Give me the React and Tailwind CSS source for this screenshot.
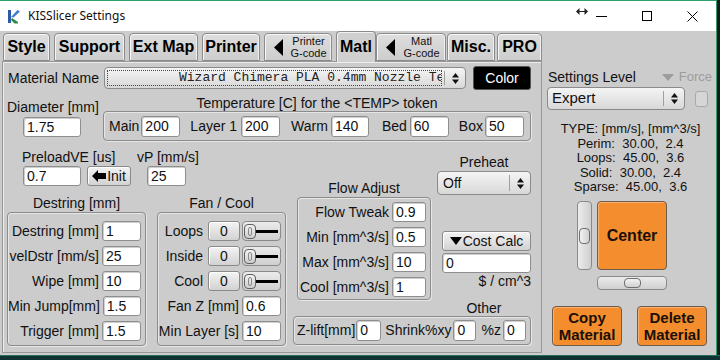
import React from 'react';

const Arrows = () => (
  <svg width="7" height="11" viewBox="0 0 7 11">
    <polygon points="0,4.5 3.5,0 7,4.5" fill="#111" />
    <polygon points="0,6.5 3.5,11 7,6.5" fill="#111" />
  </svg>
);

function Field({ v, cls = '' }) {
  return (
    <div className={`bg-white border border-[#8e8e8e] rounded-[3px] shadow-[inset_1px_1px_0_#cfcfcf] flex items-center pl-[3px] text-[14px] text-[#111] whitespace-nowrap overflow-hidden ${cls}`}>
      {v}
    </div>
  );
}

function Btn({ children, cls = '' }) {
  return (
    <div className={`bg-linear-to-b from-[#f3f3f3] to-[#d2d2d2] border border-[#8a8a8a] rounded-[3px] shadow-[inset_1px_1px_0_#ffffff] flex items-center justify-center text-[14px] text-[#111] ${cls}`}>
      {children}
    </div>
  );
}

function Group({ cls = '', children }) {
  return (
    <div className={`border border-[#8c8c8c] rounded-[4px] shadow-[inset_1px_1px_0_#e6e6e6,1px_1px_0_#e6e6e6] ${cls}`}>
      {children}
    </div>
  );
}

function Select({ cls = '', children }) {
  return (
    <div className={`bg-linear-to-b from-[#f5f5f5] to-[#d8d8d8] border border-[#8a8a8a] rounded-[4px] flex items-stretch ${cls}`}>
      <div className="flex-1 flex items-center overflow-hidden whitespace-nowrap">{children}</div>
      <div className="w-px bg-[#a0a0a0] my-[3px]" />
      <div className="w-[20px] flex items-center justify-center">
        <Arrows />
      </div>
    </div>
  );
}

function Tri({ cls = '' }) {
  return (
    <svg width="9" height="17" viewBox="0 0 9 17" className={cls}>
      <polygon points="9,0 9,17 0,8.5" fill="#000" />
    </svg>
  );
}

function Tab({ cls, children, selected }) {
  return (
    <div
      className={`rounded-t-[4px] border border-[#8b8b8b] flex items-center justify-center text-black ${
        selected
          ? 'h-[31px] bg-[#d0d0d0] border-b-0 -mb-px z-10 relative shadow-[inset_1px_1px_0_#f2f2f2]'
          : 'h-[28px] bg-linear-to-b from-[#dedede] to-[#cdcdcd] shadow-[inset_1px_1px_0_#f6f6f6,inset_-1px_0_0_#f0f0f0]'
      } ${cls}`}
    >
      {children}
    </div>
  );
}

function SmallTab({ cls, top }) {
  return (
    <Tab cls={`${cls} justify-start! pl-[9px]`}>
      <Tri />
      <div className="flex-1 ml-[3px] text-center text-[11px] leading-[12px] text-[#111]">
        <div>{top}</div>
        <div>G-code</div>
      </div>
    </Tab>
  );
}

function Slider() {
  return (
    <div className="ml-[2px] w-[39px] h-[20px] bg-linear-to-b from-[#ececec] to-[#cfcfcf] border border-[#8a8a8a] rounded-[4px] flex items-center pl-px pr-[2px]">
      <div className="w-[12px] h-[15px] rounded-[4px] border border-[#5e5e5e] bg-linear-to-b from-[#f2f2f2] to-[#cfcfcf] flex items-center justify-center">
        <div className="w-[4px] h-[9px] rounded-[2px] border border-[#8a8a8a]" />
      </div>
      <div className="flex-1 h-[3px] bg-black" />
    </div>
  );
}

function LRow({ label, children }) {
  return (
    <div className="flex justify-end items-center h-[20px] pr-[4px] text-[14px] text-[#111] whitespace-nowrap">
      <span>{label}</span>
      {children}
    </div>
  );
}

function OrangeBtn({ cls = '', children }) {
  return (
    <div className={`bg-[#f48d2d] border border-[#6d5c4c] rounded-[4px] shadow-[inset_1px_1px_0_#f9b273] flex items-center justify-center text-center font-bold text-[#1a1008] ${cls}`}>
      {children}
    </div>
  );
}

export default function App() {
  return (
    <div className="w-[720px] h-[360px] overflow-hidden bg-[#141a1a] flex flex-col font-['Liberation_Sans',Arial,sans-serif] text-[#111]">
      <div className="w-[717px] h-[355px] flex flex-col border-t border-r border-[#2f9e6d] bg-[#cccccc]">
        {/* Title bar */}
        <div className="h-[30px] bg-white flex items-center relative">
          <svg width="14" height="15" viewBox="0 0 14 15" className="ml-[7px]">
            <path d="M1 1 L4 1 L4 14 L1 14 Z" fill="#2a5aa8" />
            <path d="M4 8 L10.5 1 L13 2.5 L6.5 8.5 Z" fill="#3b7fd0" />
            <path d="M5 9 L11 13 L11 14.5 L7.5 14.5 L4 11 Z" fill="#2e8a49" />
          </svg>
          <span className="ml-[7px] text-[12px] font-['Noto_Sans',sans-serif] text-[#111]">KISSlicer Settings</span>
          <div className="ml-auto flex items-center">
            <svg width="12" height="7" viewBox="0 0 12 7" className="-mt-[9px]">
              <polygon points="0,3.5 3.5,0 3.5,7" fill="#222" />
              <polygon points="12,3.5 8.5,0 8.5,7" fill="#222" />
              <rect x="3" y="3" width="6" height="1" fill="#222" />
            </svg>
            <div className="ml-[8px] w-[11px] h-px bg-black mt-[1px]" />
            <div className="ml-[35px] w-[10px] h-[10px] border border-black" />
            <svg width="11" height="11" viewBox="0 0 11 11" className="ml-[35px] mr-[18px]">
              <path d="M0.5 0.5 L10.5 10.5 M10.5 0.5 L0.5 10.5" stroke="#000" strokeWidth="1" />
            </svg>
          </div>
        </div>

        {/* Body */}
        <div className="flex flex-1">
          {/* Left column: tabs + panel */}
          <div className="ml-[2px] w-[540px] flex flex-col">
            <div className="h-[30px] flex items-end text-[16px] font-bold">
              <Tab cls="ml-px w-[47px]">Style</Tab>
              <Tab cls="ml-[4px] w-[71px]">Support</Tab>
              <Tab cls="ml-[4px] w-[69px]">Ext Map</Tab>
              <Tab cls="ml-[4px] w-[58px]">Printer</Tab>
              <SmallTab cls="ml-[4px] w-[68px] font-normal" top="Printer" />
              <Tab cls="ml-[4px] w-[40px]" selected>Matl</Tab>
              <SmallTab cls="ml-0 w-[70px] font-normal" top="Matl" />
              <Tab cls="ml-px w-[48px]">Misc.</Tab>
              <Tab cls="ml-[2px] w-[45px]">PRO</Tab>
            </div>
            <div className="h-[292px] border border-[#979797] shadow-[inset_1px_1px_0_#ececec] flex flex-col text-[14px]">
              {/* Row A */}
              <div className="mt-[4px] h-[24px] flex items-center pl-[5px]">
                <span className="w-[96px]">Material Name</span>
                <Select cls="w-[362px] h-[22px]">
                  <div className="m-[2px] flex-1 h-[16px] border border-dotted border-[#444] pl-[71px] flex items-center overflow-hidden font-['Liberation_Mono',monospace] text-[13px] text-[#222] whitespace-nowrap">
                    Wizard Chimera PLA 0.4mm Nozzle Test
                  </div>
                </Select>
                <div className="ml-[7px] w-[58px] h-[24px] bg-black border border-[#555] rounded-[3px] text-white flex items-center justify-center text-[14px]">
                  Color
                </div>
              </div>

              {/* Row B */}
              <div className="mt-[6px] flex">
                <div className="w-[100px] pl-[4px] flex flex-col">
                  <div className="mt-[3px] h-[16px] leading-[16px] whitespace-nowrap">Diameter [mm]</div>
                  <Field v="1.75" cls="mt-[2px] ml-[16px] w-[58px] h-[20px]" />
                </div>
                <div className="w-[428px] flex flex-col">
                  <div className="h-[15px] leading-[15px] text-center whitespace-nowrap">
                    Temperature [C] for the &lt;TEMP&gt; token
                  </div>
                  <Group cls="h-[30px] flex items-center pl-[5px] whitespace-nowrap">
                    <span>Main</span>
                    <Field v="200" cls="ml-[2px] w-[39px] h-[21px]" />
                    <span className="ml-[10px]">Layer 1</span>
                    <Field v="200" cls="ml-[4px] w-[39px] h-[21px]" />
                    <span className="ml-[11px]">Warm</span>
                    <Field v="140" cls="ml-[3px] w-[38px] h-[21px]" />
                    <span className="ml-[13px]">Bed</span>
                    <Field v="60" cls="ml-[3px] w-[39px] h-[21px]" />
                    <span className="ml-[10px]">Box</span>
                    <Field v="50" cls="ml-[2px] w-[39px] h-[21px]" />
                  </Group>
                </div>
              </div>

              {/* Row C/D */}
              <div className="flex">
                {/* left col */}
                <div className="w-[290px] flex flex-col">
                  <div className="mt-[9px] h-[15px] leading-[15px] flex whitespace-nowrap">
                    <span className="ml-[19px] w-[115px]">PreloadVE [us]</span>
                    <span>vP [mm/s]</span>
                  </div>
                  <div className="mt-px flex items-center">
                    <Field v="0.7" cls="ml-[20px] w-[58px] h-[20px]" />
                    <Btn cls="ml-[6px] w-[44px] h-[20px]">
                      <svg width="14" height="12" viewBox="0 0 14 12">
                        <polygon points="0,6 6,0 6,3 14,3 14,9 6,9 6,12" fill="#000" />
                      </svg>
                      <span className="ml-px">Init</span>
                    </Btn>
                    <Field v="25" cls="ml-[16px] w-[39px] h-[20px]" />
                  </div>
                  <div className="mt-[10px] ml-[4px] flex">
                    <div className="w-[139px] flex flex-col">
                      <div className="h-[15px] leading-[15px] text-center">Destring [mm]</div>
                      <Group cls="mt-px h-[134px] pt-[8px] flex flex-col gap-[5px]">
                        <LRow label="Destring [mm]"><Field v="1" cls="ml-[3px] w-[39px] h-[20px]" /></LRow>
                        <LRow label="velDstr [mm/s]"><Field v="25" cls="ml-[3px] w-[39px] h-[20px]" /></LRow>
                        <LRow label="Wipe [mm]"><Field v="10" cls="ml-[3px] w-[39px] h-[20px]" /></LRow>
                        <LRow label="Min Jump[mm]"><Field v="1.5" cls="ml-[3px] w-[39px] h-[20px]" /></LRow>
                        <LRow label="Trigger [mm]"><Field v="1.5" cls="ml-[3px] w-[39px] h-[20px]" /></LRow>
                      </Group>
                    </div>
                    <div className="ml-[11px] w-[129px] flex flex-col">
                      <div className="h-[15px] leading-[15px] text-center">Fan / Cool</div>
                      <Group cls="mt-px h-[134px] pt-[8px] flex flex-col gap-[5px]">
                        <LRow label="Loops"><Btn cls="ml-[5px] w-[32px] h-[20px]">0</Btn><Slider /></LRow>
                        <LRow label="Inside"><Btn cls="ml-[5px] w-[32px] h-[20px]">0</Btn><Slider /></LRow>
                        <LRow label="Cool"><Btn cls="ml-[5px] w-[32px] h-[20px]">0</Btn><Slider /></LRow>
                        <LRow label="Fan Z [mm]"><Field v="0.6" cls="ml-[3px] w-[39px] h-[20px]" /></LRow>
                        <LRow label="Min Layer [s]"><Field v="10" cls="ml-[3px] w-[39px] h-[20px]" /></LRow>
                      </Group>
                    </div>
                  </div>
                </div>

                {/* right col */}
                <div className="w-[238px] flex flex-col">
                  <div className="flex items-start">
                    <div className="ml-[4px] w-[134px] mt-[40px] flex flex-col">
                      <div className="h-[15px] leading-[15px] text-center">Flow Adjust</div>
                      <Group cls="mt-px h-[103px] pt-[4px] flex flex-col gap-[5px]">
                        <LRow label="Flow Tweak"><Field v="0.9" cls="ml-[3px] w-[34px] h-[20px]" /></LRow>
                        <LRow label="Min [mm^3/s]"><Field v="0.5" cls="ml-[3px] w-[34px] h-[20px]" /></LRow>
                        <LRow label="Max [mm^3/s]"><Field v="10" cls="ml-[3px] w-[34px] h-[20px]" /></LRow>
                        <LRow label="Cool [mm^3/s]"><Field v="1" cls="ml-[3px] w-[34px] h-[20px]" /></LRow>
                      </Group>
                    </div>
                    <div className="ml-[6px] w-[94px] flex flex-col">
                      <div className="mt-[13px] h-[16px] leading-[16px] text-center">Preheat</div>
                      <Select cls="mt-px h-[24px]">
                        <span className="pl-[5px] text-[14px]">Off</span>
                      </Select>
                      <Btn cls="mt-[36px] ml-[5px] w-[89px] h-[20px]">
                        <svg width="12" height="8" viewBox="0 0 12 8">
                          <polygon points="0,0 12,0 6,8" fill="#000" />
                        </svg>
                        <span className="ml-px">Cost Calc</span>
                      </Btn>
                      <Field v="0" cls="mt-[2px] ml-[5px] w-[89px] h-[20px]" />
                      <div className="mt-px h-[14px] leading-[14px] text-right">$ / cm^3</div>
                      <div className="mt-[12px] h-[16px] leading-[16px] text-center">Other</div>
                    </div>
                  </div>
                  <Group cls="h-[29px] flex items-center pl-[3px] whitespace-nowrap">
                    <span>Z-lift[mm]</span>
                    <Field v="0" cls="ml-px w-[25px] h-[21px]" />
                    <span className="ml-[4px]">Shrink%xy</span>
                    <Field v="0" cls="ml-[2px] w-[23px] h-[21px]" />
                    <span className="ml-[5px]">%z</span>
                    <Field v="0" cls="ml-[2px] w-[23px] h-[21px]" />
                  </Group>
                </div>
              </div>
            </div>
          </div>

          {/* Right panel */}
          <div className="ml-[3px] w-[171px] flex flex-col text-[14px]">
            <div className="mt-[38px] h-[16px] leading-[16px] flex items-center justify-between whitespace-nowrap">
              <span className="pl-[3px]">Settings Level</span>
              <span className="pr-[4px] flex items-center text-[#9c9c9c] text-[13px]">
                <svg width="12" height="7" viewBox="0 0 12 7" className="mr-[5px]">
                  <polygon points="0,0 12,0 6,7" fill="#9c9c9c" />
                </svg>
                Force
              </span>
            </div>
            <div className="mt-[2px] flex items-center">
              <Select cls="ml-[2px] w-[138px] h-[23px]">
                <span className="pl-[4px] text-[15px]">Expert</span>
              </Select>
              <div className="ml-[10px] w-[13px] h-[16px] rounded-[3px] border border-[#a9a9a9] bg-[#d6d6d6]" />
            </div>
            <div className="mt-[12px] h-[73px] text-[13px] leading-[14.5px] text-center whitespace-pre">
              <div>TYPE: [mm/s], [mm^3/s]</div>
              <div>Perim:  30.00,  2.4</div>
              <div>Loops:  45.00,  3.6</div>
              <div>Solid:  30.00,  2.4</div>
              <div>Sparse:  45.00,  3.6</div>
            </div>
            <div className="mt-[6px] ml-[32px] flex">
              <div className="w-[15px] h-[69px] rounded-[4px] border border-[#8a8a8a] bg-linear-to-r from-[#ececec] to-[#cfcfcf] flex flex-col items-center pt-[26px]">
                <div className="w-[11px] h-[16px] rounded-[4px] border border-[#6e6e6e] bg-linear-to-r from-[#f3f3f3] to-[#d0d0d0]" />
              </div>
              <OrangeBtn cls="ml-[5px] w-[70px] h-[69px] text-[16px]">Center</OrangeBtn>
            </div>
            <div className="mt-[6px] ml-[52px] w-[70px] h-[14px] rounded-[4px] border border-[#8a8a8a] bg-linear-to-b from-[#ececec] to-[#cfcfcf] flex items-center pl-[26px]">
              <div className="w-[17px] h-[10px] rounded-[4px] border border-[#6e6e6e] bg-linear-to-b from-[#f3f3f3] to-[#d0d0d0]" />
            </div>
            <div className="mt-[16px] ml-[7px] flex">
              <OrangeBtn cls="w-[70px] h-[40px] text-[15px] leading-[17px]">Copy<br />Material</OrangeBtn>
              <OrangeBtn cls="ml-[15px] w-[70px] h-[40px] text-[15px] leading-[17px]">Delete<br />Material</OrangeBtn>
            </div>
          </div>
        </div>
      </div>
      <div className="h-[5px] w-[720px] bg-[#0f3333] border-t border-[#2a6e5e]" />
    </div>
  );
}
